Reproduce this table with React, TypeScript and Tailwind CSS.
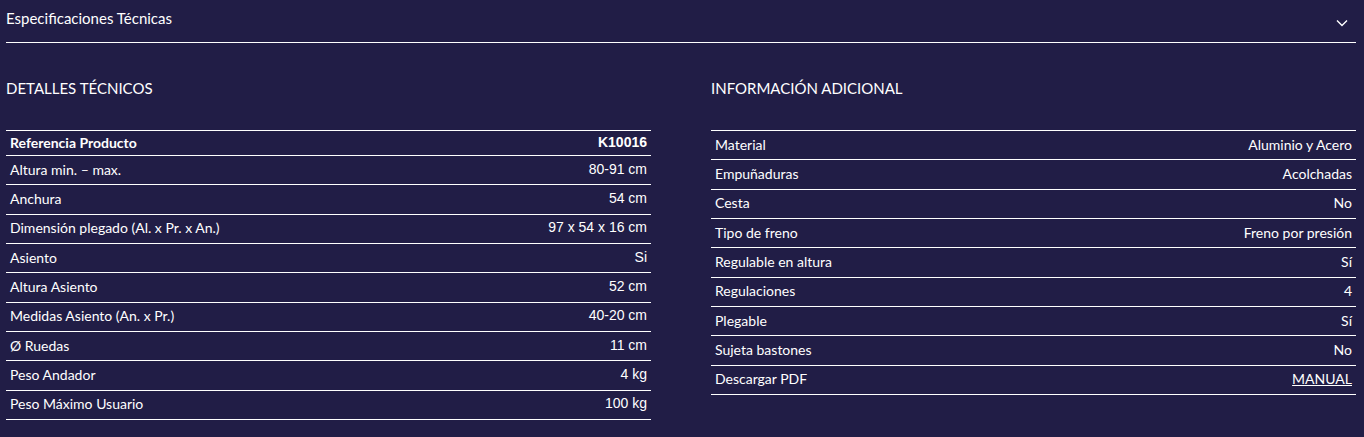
import React from 'react';

const detalles = [
  { label: 'Altura min. – max.', value: '80-91 cm' },
  { label: 'Anchura', value: '54 cm' },
  { label: 'Dimensión plegado (Al. x Pr. x An.)', value: '97 x 54 x 16 cm' },
  { label: 'Asiento', value: 'Si' },
  { label: 'Altura Asiento', value: '52 cm' },
  { label: 'Medidas Asiento (An. x Pr.)', value: '40-20 cm' },
  { label: 'Ø Ruedas', value: '11 cm' },
  { label: 'Peso Andador', value: '4 kg' },
  { label: 'Peso Máximo Usuario', value: '100 kg' },
];

const adicional = [
  { label: 'Material', value: 'Aluminio y Acero' },
  { label: 'Empuñaduras', value: 'Acolchadas' },
  { label: 'Cesta', value: 'No' },
  { label: 'Tipo de freno', value: 'Freno por presión' },
  { label: 'Regulable en altura', value: 'Sí' },
  { label: 'Regulaciones', value: '4' },
  { label: 'Plegable', value: 'Sí' },
  { label: 'Sujeta bastones', value: 'No' },
];

const font = "font-['Lato',sans-serif]";
const arial = "font-['Liberation_Sans',Arial,sans-serif]";

export default function App() {
  return (
    <div className={`min-h-[437px] bg-[#211d46] text-white pl-[6px] pr-[8px] ${font}`}>
      {/* Accordion header */}
      <div className="h-[43px] flex items-center justify-between border-b border-white">
        <span className="text-[15px] -mt-[6px]">Especificaciones Técnicas</span>
        <svg width="12" height="8" viewBox="0 0 12 8" className="mr-[8px] mt-[4px]" fill="none" stroke="white" strokeWidth="1.4">
          <path d="M1 1.5 L6 6.5 L11 1.5" />
        </svg>
      </div>

      <div className="grid grid-cols-2 gap-[60px]">
        {/* Left: technical details */}
        <div>
          <h3 className="text-[15px] h-[87px] pt-[35px] leading-[20px] font-normal">DETALLES TÉCNICOS</h3>
          <div className="border-b border-white text-[14px]">
            <div className="h-[25px] border-t border-white flex items-center justify-between px-[4px] pb-[2px] font-bold">
              <span>Referencia Producto</span>
              <span className={arial}>K10016</span>
            </div>
            {detalles.map((row) => (
              <div key={row.label} className="h-[29.33px] border-t border-white flex items-center justify-between px-[4px] pb-[2px]">
                <span>{row.label}</span>
                <span className={arial}>{row.value}</span>
              </div>
            ))}
          </div>
        </div>

        {/* Right: additional info */}
        <div>
          <h3 className="text-[15px] h-[87px] pt-[35px] leading-[20px] font-normal">INFORMACIÓN ADICIONAL</h3>
          <div className="border-b border-white text-[14px]">
            {adicional.map((row) => (
              <div key={row.label} className="h-[29.33px] border-t border-white flex items-center justify-between px-[4px] pb-[2px]">
                <span>{row.label}</span>
                <span>{row.value}</span>
              </div>
            ))}
            <div className="h-[29.33px] border-t border-white flex items-center justify-between px-[4px] pb-[2px]">
              <span>Descargar PDF</span>
              <a href="#" className="underline">MANUAL</a>
            </div>
          </div>
        </div>
      </div>
    </div>
  );
}
